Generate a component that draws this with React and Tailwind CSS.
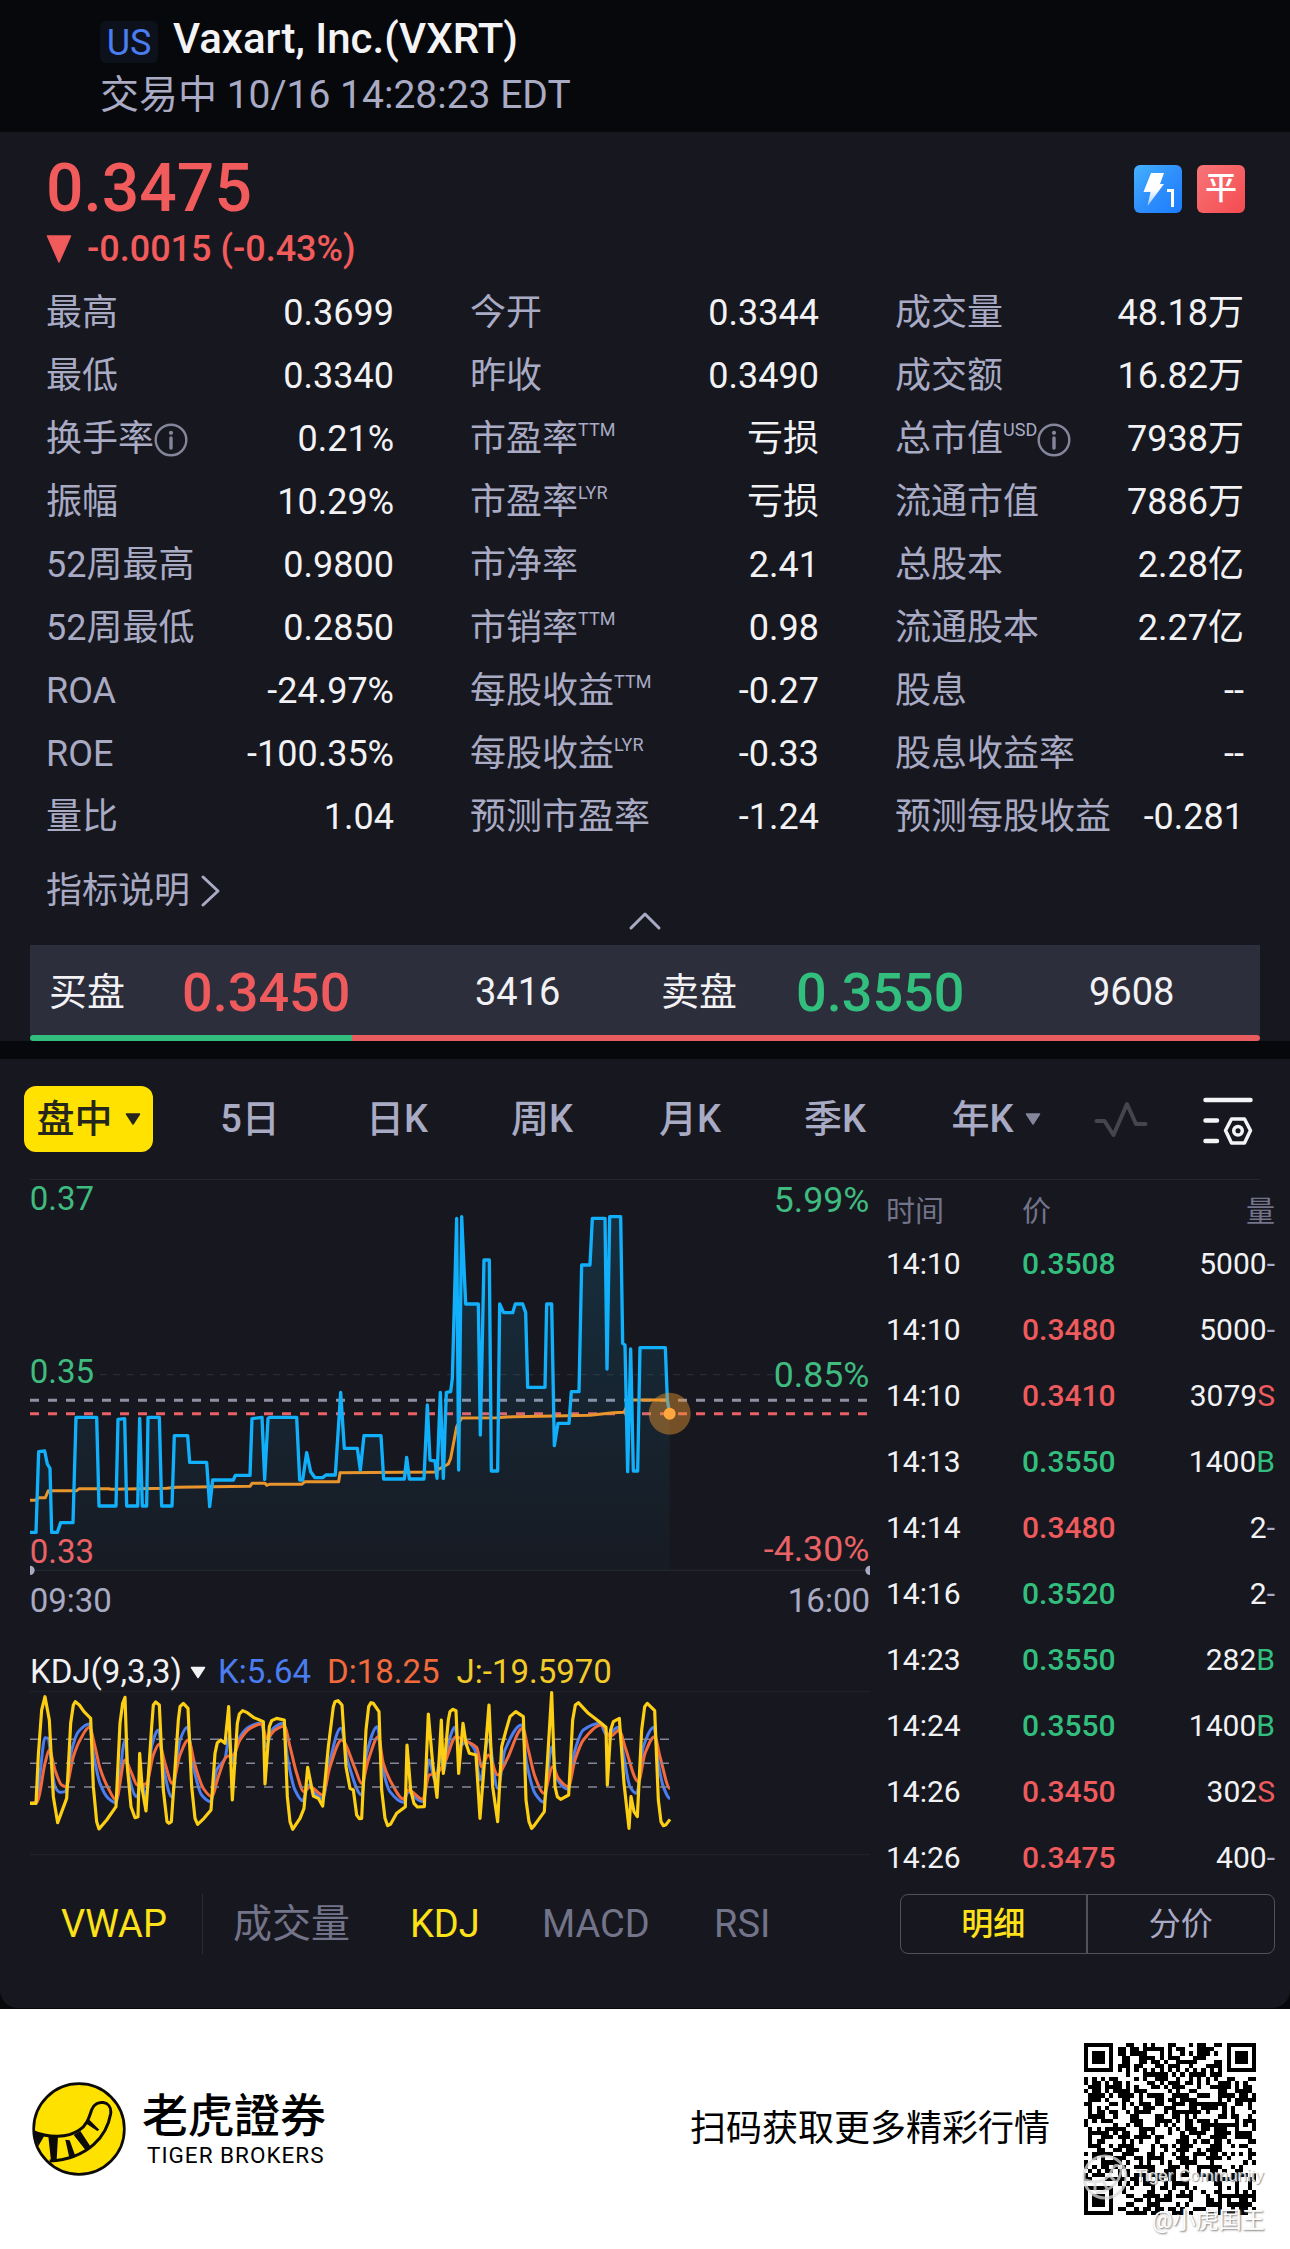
const STATS = [
  [
    { label: '最高', value: '0.3699' },
    { label: '最低', value: '0.3340' },
    { label: '换手率', info: true, value: '0.21%' },
    { label: '振幅', value: '10.29%' },
    { label: '52周最高', value: '0.9800' },
    { label: '52周最低', value: '0.2850' },
    { label: 'ROA', value: '-24.97%' },
    { label: 'ROE', value: '-100.35%' },
    { label: '量比', value: '1.04' },
  ],
  [
    { label: '今开', value: '0.3344' },
    { label: '昨收', value: '0.3490' },
    { label: '市盈率', sup: 'TTM', value: '亏损' },
    { label: '市盈率', sup: 'LYR', value: '亏损' },
    { label: '市净率', value: '2.41' },
    { label: '市销率', sup: 'TTM', value: '0.98' },
    { label: '每股收益', sup: 'TTM', value: '-0.27' },
    { label: '每股收益', sup: 'LYR', value: '-0.33' },
    { label: '预测市盈率', value: '-1.24' },
  ],
  [
    { label: '成交量', value: '48.18万' },
    { label: '成交额', value: '16.82万' },
    { label: '总市值', sup: 'USD', info: true, value: '7938万' },
    { label: '流通市值', value: '7886万' },
    { label: '总股本', value: '2.28亿' },
    { label: '流通股本', value: '2.27亿' },
    { label: '股息', value: '--' },
    { label: '股息收益率', value: '--' },
    { label: '预测每股收益', value: '-0.281' },
  ],
];

const TRADES = [
  { time: '14:10', price: '0.3508', up: true, qty: '5000', side: '-' },
  { time: '14:10', price: '0.3480', up: false, qty: '5000', side: '-' },
  { time: '14:10', price: '0.3410', up: false, qty: '3079', side: 'S' },
  { time: '14:13', price: '0.3550', up: true, qty: '1400', side: 'B' },
  { time: '14:14', price: '0.3480', up: false, qty: '2', side: '-' },
  { time: '14:16', price: '0.3520', up: true, qty: '2', side: '-' },
  { time: '14:23', price: '0.3550', up: true, qty: '282', side: 'B' },
  { time: '14:24', price: '0.3550', up: true, qty: '1400', side: 'B' },
  { time: '14:26', price: '0.3450', up: false, qty: '302', side: 'S' },
  { time: '14:26', price: '0.3475', up: false, qty: '400', side: '-' },
];

const SIDE_COLORS = { '-': 'text-[#a9aac4]', S: 'text-[#ef5a5d]', B: 'text-[#32bf7d]' };

const PRICE =
  '90,1117 108,1117 116,875 134,873 142,912 150,925 155,1117 172,1117 182,1088 219,1088 228,772 290,772 297,1038 348,1038 354,778 374,776 380,1038 413,1038 419,775 427,1038 440,1038 444,772 478,772 485,1038 516,1038 523,827 563,827 569,907 620,907 629,1040 638,960 700,960 706,946 750,946 756,776 786,772 794,958 804,776 808,772 890,772 899,960 908,960 920,878 932,935 945,953 968,953 978,945 1006,945 1022,697 1033,865 1072,865 1081,930 1092,827 1143,827 1151,957 1213,957 1220,892 1228,957 1272,957 1282,735 1290,900 1305,903 1311,955 1321,697 1330,955 1339,697 1352,695 1357,655 1370,175 1376,930 1385,170 1397,432 1435,432 1441,825 1452,300 1468,300 1474,933 1493,933 1499,432 1511,458 1538,458 1546,432 1568,432 1577,458 1583,682 1635,682 1640,432 1655,432 1663,857 1674,790 1707,790 1714,695 1737,695 1745,315 1770,315 1777,175 1815,175 1821,627 1829,170 1862,170 1868,550 1875,555 1883,935 1892,567 1900,933 1913,933 1920,563 1996,563 2002,720 2009,761';

const VWAP =
  '90,1021 105,1021 117,1013 136,1013 145,992 230,992 238,986 325,986 335,988 500,985 530,982 750,979 756,970 795,970 800,976 808,973 905,973 915,965 1016,965 1020,938 1305,936 1315,928 1345,912 1352,895 1370,800 1385,774 1490,773 1540,770 1660,768 1770,766 1840,758 1872,757 1880,740 1890,720 2005,720';

const J_LINE =
  '90,490 108,490 115,345 125,210 135,170 148,240 160,470 173,548 200,475 212,250 220,195 226,185 238,195 252,215 272,235 280,440 290,545 297,567 320,540 348,500 360,250 368,190 375,172 382,380 393,500 405,533 414,530 419,340 427,450 438,513 455,260 460,195 467,186 478,195 490,450 501,545 507,550 514,545 520,460 535,240 540,200 550,190 564,205 575,440 585,535 593,553 612,535 633,510 645,340 652,308 662,300 675,310 686,200 697,480 712,250 718,222 728,212 742,218 760,232 790,245 795,432 808,260 815,242 830,235 853,240 862,470 870,545 878,568 900,535 912,505 923,382 940,468 955,475 968,498 985,320 1000,200 1005,185 1014,182 1026,195 1038,380 1050,445 1060,450 1070,525 1078,536 1085,535 1098,270 1106,200 1113,188 1120,190 1137,215 1145,450 1155,535 1163,557 1172,552 1190,520 1216,500 1221,315 1232,450 1242,490 1252,501 1273,500 1285,222 1298,370 1311,472 1324,240 1330,400 1345,240 1350,215 1358,208 1368,212 1376,400 1389,250 1398,310 1408,340 1428,345 1440,535 1467,195 1478,440 1493,545 1505,320 1517,275 1530,230 1547,215 1570,230 1578,480 1587,545 1595,565 1603,556 1633,515 1655,158 1665,440 1672,470 1682,478 1706,465 1718,240 1726,195 1735,188 1765,220 1800,247 1818,262 1822,435 1832,270 1840,245 1858,235 1872,430 1887,565 1893,470 1902,515 1912,530 1925,270 1934,200 1942,190 1964,212 1975,480 1983,545 1990,557 1998,554 2010,538';

const K_LINE =
  '90,490 108,490 120,400 135,293 145,295 152,350 165,440 180,457 195,455 215,330 235,275 268,252 280,340 300,430 325,475 348,488 375,300 385,400 410,470 425,430 438,470 455,320 475,270 490,380 515,470 540,300 562,262 580,380 605,465 632,485 650,390 675,355 688,290 697,370 715,300 745,262 785,248 797,320 820,265 850,250 862,350 885,450 908,482 925,435 945,460 968,475 990,360 1022,265 1045,370 1085,465 1100,340 1132,260 1145,370 1170,455 1210,487 1225,455 1255,480 1270,485 1287,360 1305,420 1325,340 1330,395 1345,310 1365,262 1376,320 1400,305 1425,330 1440,420 1465,300 1493,445 1515,330 1565,255 1580,370 1605,460 1632,487 1655,320 1670,415 1703,447 1725,330 1750,270 1800,250 1820,285 1855,262 1870,340 1890,440 1910,460 1930,320 1962,262 1975,370 1990,440 2010,475';

const D_LINE =
  '90,490 112,485 135,370 148,330 165,390 185,435 198,440 220,350 240,300 268,262 285,320 300,385 325,445 348,480 375,360 395,400 412,435 425,435 440,430 460,345 478,312 495,370 517,430 540,345 565,300 585,375 610,445 635,470 655,410 680,350 700,345 720,300 750,265 785,252 800,295 825,270 853,258 870,320 890,400 912,455 930,440 968,465 990,380 1025,300 1065,385 1085,430 1105,360 1135,290 1150,370 1175,430 1210,477 1225,450 1268,478 1288,405 1310,400 1335,365 1368,290 1390,300 1430,322 1445,380 1465,345 1493,405 1520,360 1568,265 1585,330 1605,410 1632,460 1658,380 1675,415 1705,440 1725,360 1750,300 1805,255 1830,290 1858,270 1875,320 1915,425 1935,340 1964,290 1980,350 2010,445';

// Horizontal-tangent cubic between neighbours at peaks, sloped elsewhere
const smooth = (points) => {
  const pts = points.split(' ').map((p) => p.split(',').map(Number));
  const slope = (i) => {
    if (i === 0 || i === pts.length - 1) return 0;
    const a = (pts[i][1] - pts[i - 1][1]) / (pts[i][0] - pts[i - 1][0]);
    const b = (pts[i + 1][1] - pts[i][1]) / (pts[i + 1][0] - pts[i][0]);
    return a * b <= 0 ? 0 : (2 * a * b) / (a + b);
  };
  let d = `M${pts[0][0]} ${pts[0][1]}`;
  for (let i = 0; i < pts.length - 1; i++) {
    const [x0, y0] = pts[i];
    const [x1, y1] = pts[i + 1];
    const h = (x1 - x0) / 3;
    d += `C${x0 + h} ${y0 + h * slope(i)} ${x1 - h} ${y1 - h * slope(i + 1)} ${x1} ${y1}`;
  }
  return d;
};

const QR_SIZE = 41;

const buildQr = () => {
  let seed = 20241;
  const rand = () => {
    seed = (seed * 1103515245 + 12345) % 2147483648;
    return seed / 2147483648;
  };
  const ring = (r, c, size) => {
    const edge = Math.min(r, c, size - 1 - r, size - 1 - c);
    return edge !== 1;
  };
  let d = '';
  for (let r = 0; r < QR_SIZE; r++) {
    for (let c = 0; c < QR_SIZE; c++) {
      let on = rand() > 0.47;
      const top = r < 8;
      const left = c < 8;
      const right = c > QR_SIZE - 9;
      const bottom = r > QR_SIZE - 9;
      if ((top && left) || (top && right) || (bottom && left)) {
        const fr = bottom ? r - (QR_SIZE - 7) : r;
        const fc = right ? c - (QR_SIZE - 7) : c;
        on = fr >= 0 && fc >= 0 && fr < 7 && fc < 7 && ring(fr, fc, 7);
      } else if (r >= 32 && r <= 36 && c >= 32 && c <= 36) {
        on = ring(r - 32, c - 32, 5);
      } else if (r === 6 || c === 6) {
        on = (r + c) % 2 === 0;
      }
      if (on) d += `M${c} ${r}h1v1h-1z`;
    }
  }
  return d;
};

const QR_PATH = buildQr();

const InfoIcon = () => (
  <svg className="w-[34px] h-[34px]" viewBox="0 0 34 34" fill="none">
    <circle cx="17" cy="17" r="15.3" stroke="#85869c" strokeWidth="2.4" />
    <circle cx="17" cy="9.8" r="2.1" fill="#85869c" />
    <path d="M17 15v10" stroke="#85869c" strokeWidth="3.4" strokeLinecap="round" />
  </svg>
);

const Caret = ({ className }) => (
  <svg className={className} viewBox="0 0 16 12">
    <path d="M1.5 1h13L8 11z" fill="currentColor" stroke="currentColor" strokeWidth="1.5" strokeLinejoin="round" />
  </svg>
);

const Header = () => (
  <header className="h-[132px] bg-[#07080b] pl-[100px] pt-[17px]">
    <div className="flex items-center gap-[15px] h-[44px]">
      <span className="mt-[6px] w-[58px] h-[42px] rounded-md bg-[#0d111c] text-[#4a7df0] text-[36px] leading-[44px] text-center">US</span>
      <h1 className="text-[#f4f4f6] text-[42px] leading-[44px] font-medium whitespace-nowrap">Vaxart, Inc.(VXRT)</h1>
    </div>
    <p className="mt-[11px] text-[#a9aac4] text-[39px] leading-[46px] whitespace-nowrap">交易中 10/16 14:28:23 EDT</p>
  </header>
);

const Quote = () => (
  <section className="h-[156px] flex justify-between pl-[46px] pr-[45px] text-[#f25b5b]">
    <div>
      <div className="mt-[22px] text-[66px] leading-[70px] font-medium">0.3475</div>
      <div className="flex items-center h-[50px] gap-[15px]">
        <svg className="w-[26px] h-[30px]" viewBox="0 0 26 30">
          <path d="M1.5 2h23L13 28z" fill="currentColor" stroke="currentColor" strokeWidth="1.5" strokeLinejoin="round" />
        </svg>
        <span className="text-[36px] leading-[50px] font-medium">-0.0015 (-0.43%)</span>
      </div>
    </div>
    <div className="flex gap-[15px] mt-[33px]">
      <div className="w-[48px] h-[48px] rounded-md bg-linear-to-br from-[#45b2ff] via-[#2f8ffb] to-[#1a7cff]">
        <svg className="w-[48px] h-[48px]" viewBox="0 0 48 48">
          <defs>
            <linearGradient id="bolt" x1="0" y1="0" x2="0" y2="1">
              <stop offset="0.5" stopColor="#fff" />
              <stop offset="1" stopColor="#fff" stopOpacity="0.55" />
            </linearGradient>
          </defs>
          <path d="M17 8h13l-4 11h4L13.5 41l3-14H9.5z" fill="url(#bolt)" />
          <path d="M33 25.5h5.5V42" fill="none" stroke="#fff" strokeWidth="3" />
        </svg>
      </div>
      <div className="w-[48px] h-[48px] rounded-md bg-linear-to-br from-[#f77478] to-[#f44a50] text-white text-[32px] leading-[46px] font-medium text-center">平</div>
    </div>
  </section>
);

const Stats = () => (
  <section className="grid grid-cols-[348px_349px_349px] gap-x-[76px] pl-[46px] h-[568px] content-start">
    {STATS.map((column, i) => (
      <div key={i} className="-mt-[6px]">
        {column.map((row) => (
          <div key={row.label + (row.sup || '')} className="flex items-center justify-between h-[63px] text-[36px] leading-[63px] whitespace-nowrap">
            <span className="flex items-center text-[#a9aac4]">
              {row.label}
              {row.sup && <span className="text-[18px] leading-[20px] -mt-[20px]">{row.sup}</span>}
              {row.info && <InfoIcon />}
            </span>
            <span className="text-[#f2f2f5]">{row.value}</span>
          </div>
        ))}
      </div>
    ))}
  </section>
);

const OrderBook = () => (
  <section className="px-[30px] h-[185px]">
    <div className="flex items-center h-[68px] pl-4 pt-[2px] text-[36px] text-[#a9aac4]">
      指标说明
      <svg className="w-[22px] h-[34px] ml-[10px]" viewBox="0 0 22 34" fill="none">
        <path d="M3 3l15 14L3 31" stroke="currentColor" strokeWidth="3" strokeLinecap="round" strokeLinejoin="round" />
      </svg>
    </div>
    <div className="flex justify-center h-[21px]">
      <svg className="w-[34px] h-[20px] -mt-[13px]" viewBox="0 0 34 20" fill="none">
        <path d="M3 17L17 3l14 14" stroke="#a9aac4" strokeWidth="3" strokeLinecap="round" strokeLinejoin="round" />
      </svg>
    </div>
    <div className="grid grid-cols-[152px_202px_259px_153px_202px_262px] items-center h-[90px] pt-[4px] bg-[#2d2e3c] text-[38px] text-[#f2f2f5]">
      <span className="pl-[19px]">买盘</span>
      <span className="text-[54px] font-medium text-[#ef5a5d]">0.3450</span>
      <span className="pl-[91px]">3416</span>
      <span className="pl-[18px]">卖盘</span>
      <span className="text-[54px] font-medium text-[#32bf7d]">0.3550</span>
      <span className="pl-[91px]">9608</span>
    </div>
    <div className="flex h-[6px] rounded-full overflow-hidden">
      <div className="w-[322px] bg-[#32bf7d]" />
      <div className="flex-1 bg-[#e85c5f]" />
    </div>
  </section>
);

const PeriodTabs = () => (
  <nav className="h-[120px] pl-[24px] pt-[27px]">
    <div className="grid grid-cols-[152px_148px_146px_144px_152px_138px_184px_66px_117px] items-center justify-items-center h-[66px] text-[38px] leading-[66px] font-medium text-[#a9aac4]">
      <div className="justify-self-start flex items-center justify-center gap-[12px] w-[129px] h-[66px] rounded-xl bg-[#ffe200] text-[#26261c]">
        盘中
        <Caret className="w-[16px] h-[12px]" />
      </div>
      <span>5日</span>
      <span>日K</span>
      <span>周K</span>
      <span>月K</span>
      <span>季K</span>
      <span className="flex items-center gap-[11px]">
        年K
        <Caret className="w-[16px] h-[12px] text-[#85869c]" />
      </span>
      <svg className="w-[54px] h-[40px]" viewBox="0 0 54 40" fill="none">
        <path d="M2.5 22h8l9 14L33 5l9 20h9.5" stroke="#44454f" strokeWidth="4" strokeLinecap="round" strokeLinejoin="round" />
      </svg>
      <svg className="justify-self-end mr-[17px] mt-[4px] w-[52px] h-[52px]" viewBox="0 0 52 52" fill="none" stroke="#f4f4f6" strokeLinecap="round" strokeLinejoin="round">
        <path d="M3.5 5h45M3.5 25.5h11.5M3.5 46h11.5" strokeWidth="4.5" />
        <path d="M29.500 24h13l6 11.500-6 12.500h-13l-6-12.500z" strokeWidth="3.500" />
        <circle cx="36" cy="35.800" r="4.300" strokeWidth="3.500" />
      </svg>
    </div>
  </nav>
);

const PriceChart = () => (
  <svg className="w-[840px] h-[460px]" viewBox="90 60 2520 1380" fill="none">
    <defs>
      <linearGradient id="area" gradientUnits="userSpaceOnUse" x1="0" y1="170" x2="0" y2="1230">
        <stop offset="0" stopColor="#13b0f5" stopOpacity="0.15" />
        <stop offset="1" stopColor="#13b0f5" stopOpacity="0.02" />
      </linearGradient>
    </defs>
    <path d="M300 644H2320" stroke="#2a2b34" strokeWidth="4" strokeDasharray="20 20" />
    <path d="M90 1231H2610" stroke="#24252e" strokeWidth="4" />
    <path d="M90 721H2610" stroke="#8f90a4" strokeWidth="9" strokeDasharray="27 27" />
    <path d="M90 761H2610" stroke="#ea6265" strokeWidth="9" strokeDasharray="27 27" />
    <polygon points={`90,1231 ${PRICE} 2009,1231`} fill="url(#area)" />
    <polyline points={VWAP} stroke="#e8952e" strokeWidth="9" strokeLinejoin="round" />
    <polyline points={PRICE} stroke="#12b0fa" strokeWidth="10" strokeLinejoin="round" />
    <circle cx="2009" cy="761" r="63" fill="#e8952e" fillOpacity="0.45" />
    <circle cx="2009" cy="761" r="18" fill="#ffa63c" />
    <path d="M90 1217a14 14 0 0 1 0 28zM2610 1217a14 14 0 0 0 0 28z" fill="#a9aac4" />
    <g fontSize="99" fill="#3fbb80">
      <text x="89" y="150">0.37</text>
      <text x="89" y="668">0.35</text>
      <text x="89" y="1208" fill="#ea6265">0.33</text>
      <text x="89" y="1357" fill="#a9aac4">09:30</text>
      <text x="2610" y="1357" fill="#a9aac4" textAnchor="end">16:00</text>
    </g>
    <g fontSize="107" fill="#3fbb80" textAnchor="end">
      <text x="2608" y="157">5.99%</text>
      <text x="2608" y="680">0.85%</text>
      <text x="2608" y="1204" fill="#ea6265">-4.30%</text>
    </g>
  </svg>
);

const KdjChart = () => (
  <div className="w-[840px]">
    <div className="flex items-center h-[51px] pt-[13px] text-[33px] leading-[36px] whitespace-nowrap">
      <span className="text-[#f2f2f5]">KDJ(9,3,3)</span>
      <Caret className="w-[16px] h-[13px] ml-[8px] text-[#f2f2f5]" />
      <span className="ml-[12px] text-[#4a7df0]">K:5.64</span>
      <span className="ml-[16px] text-[#f26a3c]">D:18.25</span>
      <span className="ml-[17px] text-[#f2cb2a]">J:-19.5970</span>
    </div>
    <svg className="w-[840px] h-[168px]" viewBox="90 153 2520 504" fill="none" strokeLinejoin="round">
      <path d="M90 155H2610M90 644H2610" stroke="#1f2028" strokeWidth="4" />
      <path d={smooth(K_LINE)} stroke="#4a7df0" strokeWidth="9" />
      <path d={smooth(D_LINE)} stroke="#f26a3c" strokeWidth="9" />
      <path d="M90 298H2010M90 370H2010M90 441H2010" stroke="#85869a" strokeWidth="4.500" strokeDasharray="27 27" />
      <polyline points={J_LINE} stroke="#fccf14" strokeWidth="9.500" />
    </svg>
  </div>
);

const Trades = () => (
  <div className="w-[389px] mt-[10px]">
    <div className="grid grid-cols-[136px_1fr_auto] items-center h-[46px] text-[29px] text-[#73748a]">
      <span>时间</span>
      <span>价</span>
      <span>量</span>
    </div>
    <div className="-mt-[6px]">
      {TRADES.map((t, i) => (
        <div key={i} className="grid grid-cols-[136px_1fr_auto] items-center h-[66px] text-[30px] text-[#f2f2f5]">
          <span>{t.time}</span>
          <span className={t.up ? 'font-medium text-[#32bf7d]' : 'font-medium text-[#ef5a5d]'}>{t.price}</span>
          <span>
            {t.qty}
            <span className={SIDE_COLORS[t.side]}>{t.side}</span>
          </span>
        </div>
      ))}
    </div>
  </div>
);

const IndicatorTabs = () => (
  <div className="flex items-center h-[60px] pl-[61px] pr-[15px] text-[38px] text-[#73748a] whitespace-nowrap">
    <span className="w-[141px] text-[#fde21a]">VWAP</span>
    <span className="w-[1px] h-[60px] bg-[#2c2d37]" />
    <span className="w-[207px] pl-[30px] text-[39px]">成交量</span>
    <span className="w-[132px] text-[#fde21a]">KDJ</span>
    <span className="w-[172px]">MACD</span>
    <span>RSI</span>
    <div className="ml-auto grid grid-cols-2 w-[375px] h-[60px] rounded-lg border border-[#50515d] text-[32px] leading-[58px] text-center">
      <span className="border-r-2 border-[#50515d] font-medium text-[#fde21a]">明细</span>
      <span className="text-[#a9aac4]">分价</span>
    </div>
  </div>
);

const TigerLogo = () => (
  <svg className="w-[94px] h-[94px]" viewBox="97 155 282 282">
    <defs>
      <clipPath id="logo-disc">
        <circle cx="238" cy="296" r="136" />
      </clipPath>
    </defs>
    <circle cx="238" cy="296" r="136" fill="#ffe100" />
    <g clipPath="url(#logo-disc)">
      <path d="M95 302C150 325 205 322 238 300C262 284 268 262 276 238C288 205 338 210 333 250C322 315 268 385 150 392" fill="none" stroke="#0c0b0a" strokeWidth="9" />
      <path d="M98 300l36 16-18 32zM146 318h29l-4 72-17 2zM197 328l13 2 16 44-17 8zM222 314l20-12 30 46-14 12zM257 278l12-10 30 30-6 4z" fill="#0c0b0a" />
    </g>
    <circle cx="238" cy="296" r="136" fill="none" stroke="#0c0b0a" strokeWidth="8" />
  </svg>
);

const Footer = () => (
  <footer className="flex items-center h-[240px] bg-white pl-[32px] text-black">
    <TigerLogo />
    <div className="ml-[16px] w-[195px]">
      <div className="font-['Noto_Sans_CJK_TC',sans-serif] text-[46px] leading-[54px] -mt-[6px] font-medium whitespace-nowrap">老虎證券</div>
      <div className="mt-[3px] pl-[5px] text-[22.500px] leading-[26px] tracking-[1px] whitespace-nowrap">TIGER BROKERS</div>
    </div>
    <div className="ml-auto text-[36px] whitespace-nowrap">扫码获取更多精彩行情</div>
    <div className="relative ml-[34px] mr-[34px] w-[172px] h-[172px]">
      <svg className="w-[172px] h-[172px]" viewBox="0 0 41 41" shapeRendering="crispEdges">
        <path d={QR_PATH} fill="#000" />
      </svg>
      <svg className="absolute -left-[2px] top-[111px] w-[46px] h-[46px] opacity-75" viewBox="0 0 46 46" fill="none" stroke="#dcdcdc">
        <circle cx="23" cy="23" r="21" strokeWidth="3" />
        <path d="M3 26c14 5 24-1 27-10 3-7 10-5 9 2-2 10-10 19-25 21M13 28v9M21 26l4 9M27 21l6 6" strokeWidth="3" />
      </svg>
      <span className="absolute left-[51px] top-[121px] text-[17px] leading-[24px] text-white/80 whitespace-nowrap [text-shadow:1px_1px_1px_#999] font-['Liberation_Sans',sans-serif]">Tiger Community</span>
      <span className="absolute left-[68px] top-[165px] text-[23px] leading-[26px] text-white whitespace-nowrap [text-shadow:1px_1px_2px_#777]">@小虎国王</span>
    </div>
  </footer>
);

export default function App() {
  return (
    <div className="w-[1290px] h-[2249px] overflow-hidden bg-[#07080b] font-[Roboto,'Noto_Sans_CJK_SC',sans-serif]">
      <Header />
      <main className="h-[909px] bg-[#17181f]">
        <Quote />
        <Stats />
        <OrderBook />
      </main>
      <section className="mt-[18px] h-[949px] rounded-b-[18px] bg-[#17181f]">
        <PeriodTabs />
        <div className="mx-[30px] h-[1px] bg-[#25262f]" />
        <div className="flex h-[714px] pl-[30px]">
          <div className="w-[840px] shrink-0">
            <PriceChart />
            <KdjChart />
          </div>
          <div className="pl-[16px]">
            <Trades />
          </div>
        </div>
        <IndicatorTabs />
      </section>
      <div className="h-[1px]" />
      <Footer />
    </div>
  );
}
